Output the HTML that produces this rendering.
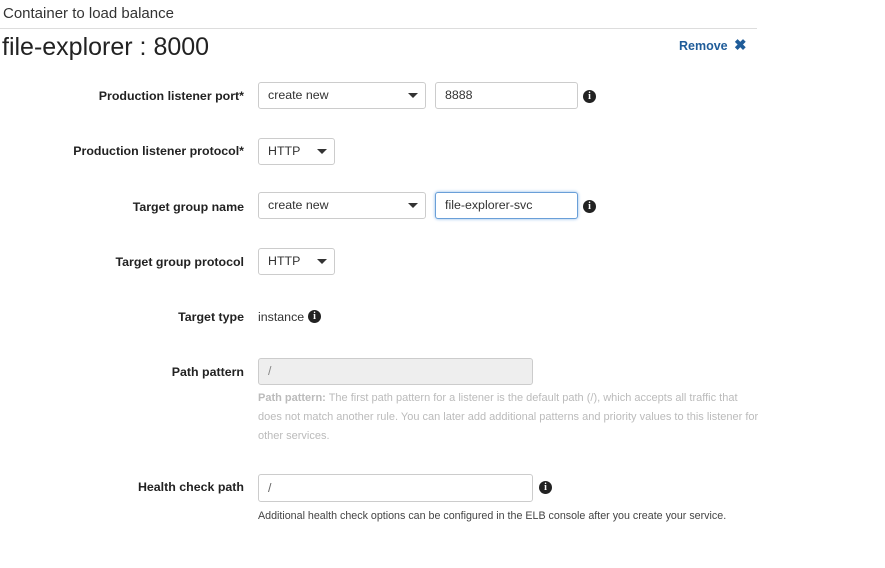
<!DOCTYPE html>
<html><head><style>
body{margin:0;width:885px;height:568px;background:#fff;font-family:"Liberation Sans",Arial,sans-serif;position:relative;overflow:hidden;color:#333}
.a{position:absolute;white-space:nowrap}
.lbl{position:absolute;right:641px;font-weight:bold;font-size:12.4px;color:#222}
.box{position:absolute;border:1px solid #ccc;border-radius:3px;background:#fff;box-sizing:border-box;font-size:12.4px;color:#333;padding-left:9px;}
.caret{position:absolute;width:0;height:0;border-left:5px solid transparent;border-right:5px solid transparent;border-top:5px solid #333}
.info{position:absolute;width:13px;height:13px;border-radius:50%;background:#222;color:#fff;font:bold 10px "Liberation Serif",serif;text-align:center;line-height:13px}
</style></head><body>
<div class="a" style="left:3px;top:5px;font-size:15px;color:#333">Container to load balance</div>
<div class="a" style="left:0;top:28px;width:757px;height:1px;background:#ddd"></div>
<div class="a" style="left:2px;top:33px;font-size:25px;color:#222">file-explorer : 8000</div>
<div class="a" style="left:679px;top:39px;font-size:12.5px;font-weight:bold;color:#1f5c99">Remove</div>
<div class="a" style="left:734px;top:36px;font-size:15px;font-weight:bold;color:#1f5c99">✖</div>

<div class="lbl" style="top:89px">Production listener port*</div>
<div class="box" style="left:258px;top:82px;width:168px;height:27px;line-height:25px">create new<div class="caret" style="left:149px;top:10px"></div></div>
<div class="box" style="left:435px;top:82px;width:143px;height:27px;line-height:25px">8888</div>
<div class="info" style="left:583px;top:90px">i</div>

<div class="lbl" style="top:144px">Production listener protocol*</div>
<div class="box" style="left:258px;top:138px;width:77px;height:27px;line-height:25px">HTTP<div class="caret" style="left:58px;top:10px"></div></div>

<div class="lbl" style="top:200px">Target group name</div>
<div class="box" style="left:258px;top:192px;width:168px;height:27px;line-height:25px">create new<div class="caret" style="left:149px;top:10px"></div></div>
<div class="box" style="left:435px;top:192px;width:143px;height:27px;line-height:25px;border-color:#6a9fd8;box-shadow:0 0 3px #8bb8e8">file-explorer-svc</div>
<div class="info" style="left:583px;top:200px">i</div>

<div class="lbl" style="top:255px">Target group protocol</div>
<div class="box" style="left:258px;top:248px;width:77px;height:27px;line-height:25px">HTTP<div class="caret" style="left:58px;top:10px"></div></div>

<div class="lbl" style="top:310px">Target type</div>
<div class="a" style="left:258px;top:310px;font-size:12.4px;color:#333">instance</div>
<div class="info" style="left:308px;top:310px">i</div>

<div class="lbl" style="top:365px">Path pattern</div>
<div class="box" style="left:258px;top:358px;width:275px;height:27px;line-height:25px;background:#eee;color:#888">/</div>
<div class="a" style="left:258px;top:389px;font-size:11px;color:#bbb;line-height:19px;white-space:normal;width:505px"><b>Path pattern:</b> The first path pattern for a listener is the default path (/), which accepts all traffic that does not match another rule. You can later add additional patterns and priority values to this listener for other services.</div>

<div class="lbl" style="top:480px">Health check path</div>
<div class="box" style="left:258px;top:474px;width:275px;height:28px;line-height:26px;color:#666">/</div>
<div class="info" style="left:539px;top:481px">i</div>
<div class="a" style="left:258px;top:510px;font-size:10.7px;color:#444">Additional health check options can be configured in the ELB console after you create your service.</div>
</body></html>
